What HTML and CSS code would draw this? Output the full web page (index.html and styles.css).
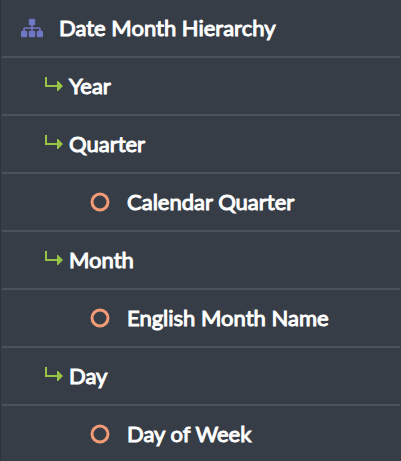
FILE: index.html
```html
<!DOCTYPE html>
<html lang="en">
  <head>
    <meta charset="UTF-8" />
    <meta name="viewport" content="width=device-width, initial-scale=1.0" />
    <title>Date Month Hierarchy</title>
    <link rel="stylesheet" href="styles.css">
  </head>
  <body>
    <svg class="symbols" aria-hidden="true">
      <symbol id="icon-level" viewBox="0 0 18 18">
        <path d="M0 0H2V8H12V4H13L18 9L13 14H12V10H0Z" />
      </symbol>
      <symbol id="icon-attribute" viewBox="0 0 20 20">
        <circle cx="10" cy="10" r="8" />
      </symbol>
    </svg>

    <ul class="tree">
      <li class="row hierarchy">
        <svg class="icon" viewBox="0 0 22 20" aria-hidden="true">
          <rect x="8" y="1" width="6" height="6" rx="1" />
          <rect x="0" y="13" width="6" height="6" rx="1" />
          <rect x="8" y="13" width="6" height="6" rx="1" />
          <rect x="16" y="13" width="6" height="6" rx="1" />
          <path d="M11 6V14M3 14V11Q3 10 4 10H18Q19 10 19 11V14" />
        </svg>
        <span class="label">Date Month Hierarchy</span>
      </li>
      <li class="row level">
        <svg class="icon" aria-hidden="true"><use href="#icon-level" /></svg>
        <span class="label">Year</span>
      </li>
      <li class="row level">
        <svg class="icon" aria-hidden="true"><use href="#icon-level" /></svg>
        <span class="label">Quarter</span>
      </li>
      <li class="row attribute">
        <svg class="icon" aria-hidden="true"><use href="#icon-attribute" /></svg>
        <span class="label">Calendar Quarter</span>
      </li>
      <li class="row level">
        <svg class="icon" aria-hidden="true"><use href="#icon-level" /></svg>
        <span class="label">Month</span>
      </li>
      <li class="row attribute">
        <svg class="icon" aria-hidden="true"><use href="#icon-attribute" /></svg>
        <span class="label">English Month Name</span>
      </li>
      <li class="row level">
        <svg class="icon" aria-hidden="true"><use href="#icon-level" /></svg>
        <span class="label">Day</span>
      </li>
      <li class="row attribute">
        <svg class="icon" aria-hidden="true"><use href="#icon-attribute" /></svg>
        <span class="label">Day of Week</span>
      </li>
    </ul>
  </body>
</html>
```
FILE: styles.css
```css
* {
  margin: 0;
  padding: 0;
  box-sizing: border-box;
}

body {
  background-color: #363d46;
  color: #ffffff;
  font-family: Lato, sans-serif;
  font-size: 22px;
  font-weight: 400;
  line-height: 28px;
  -webkit-text-stroke: 1px #ffffff;
}

.symbols {
  display: none;
}

.tree {
  list-style: none;
  border-left: 1px solid #2d343c;
  padding: 0 1px;
}

.row {
  display: flex;
  align-items: center;
  min-height: 58px;
  border-bottom: 2px solid #4a525c;
}

.row:last-child {
  border-bottom-color: transparent;
}

.icon {
  flex: none;
}

.hierarchy {
  gap: 16px;
  padding-left: 19px;
}

.hierarchy .icon {
  width: 22px;
  height: 20px;
  fill: #7077c4;
  stroke: #7077c4;
  stroke-width: 0.5;
}

.hierarchy path {
  fill: none;
  stroke-width: 1.6;
}

.level {
  gap: 6px;
  padding-left: 43px;
}

.level .icon {
  width: 18px;
  height: 18px;
  fill: #97c447;
}

.attribute {
  gap: 17px;
  padding-left: 88px;
}

.attribute .icon {
  width: 20px;
  height: 20px;
  fill: none;
  stroke: #f29b76;
  stroke-width: 3;
}
```
